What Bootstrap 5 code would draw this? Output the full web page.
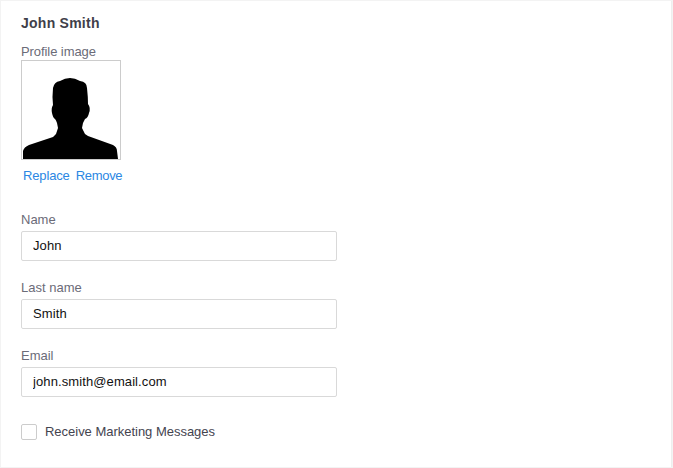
<!DOCTYPE html>
<html lang="en">
<head>
<meta charset="utf-8">
<title>Profile</title>
<link rel="stylesheet" href="https://cdn.jsdelivr.net/npm/bootstrap@5.3.0/dist/css/bootstrap.min.css">
<style>
html, body { height: 468px; overflow: hidden; background: #f3f3f3; }
body { font-family: "Liberation Sans", Arial, sans-serif; font-size: 13px; padding: 1px 1px 1px 1px; }
.sheet { background: #fff; height: 466px; margin-right: 0; border-right: 1px solid #eee; padding: 15px 20px 0 20px; }
.who { font-size: 14px; font-weight: 700; color: #3f3f4a; line-height: 15px; margin: 0 0 13px; letter-spacing: .25px; }
.lab { display: block; color: #6b6b78; font-size: 13px; line-height: 15px; margin: 0; }
.pname { letter-spacing: -.08px; padding-bottom: 1px; }
.photo { width: 100px; height: 100px; border: 1px solid #ccc; background: #fff; display: block; }
.acts { padding: 8px 2px 0; line-height: 15px; gap: 6px; }
.acts a { color: #2b87e3; text-decoration: none; letter-spacing: -.15px; }
.acts a + a { letter-spacing: -.3px; }
.fld { margin-top: 19px; width: 316px; }
.fld .form-control { height: 30px; margin-top: 4px; border: 1px solid #d9d9d9; border-radius: 2px; padding: 0 11px 2px; font-size: 13px; letter-spacing: .1px; color: #111; box-shadow: none; }
.fld.first { margin-top: 29px; }
.chk { margin-top: 27px; gap: 8px; min-height: 0; padding: 0; }
.chk .form-check-input { width: 16px; height: 16px; margin: 0; float: none; border: 1px solid #ccc; border-radius: 2px; }
.chk .form-check-label { color: #44444f; line-height: 16px; letter-spacing: -.02px; }
</style>
</head>
<body>
<div class="sheet">
  <h1 class="who">John Smith</h1>
  <span class="lab pname">Profile image</span>
  <svg class="photo" viewBox="0 0 98 98" role="img" aria-label="Profile image">
    <path fill="#000" d="M1 98 L1 90 Q2 86 7 84 L31 76 L34 73 L36 67 L35 62 Q34 59 33 58 Q31 57 30 52 Q29 47 31 44 Q30 36 31 27 Q32 21 38 20 Q43 17 48 17 Q53 17 58 20 Q65 21 65 27 Q66 36 66 43 Q69 47 67 52 Q66 57 63 58 Q62 60 61 62 L60 67 L63 73 L66 75 L91 84 Q95 86 95 90 L96 98 Z"/>
  </svg>
  <div class="acts d-flex"><a href="#">Replace</a><a href="#">Remove</a></div>
  <div class="fld first"><label class="lab" for="a">Name</label><input id="a" class="form-control" value="John"></div>
  <div class="fld"><label class="lab" for="b">Last name</label><input id="b" class="form-control" value="Smith"></div>
  <div class="fld"><label class="lab" for="c">Email</label><input id="c" class="form-control" value="john.smith@email.com"></div>
  <div class="form-check chk d-flex align-items-center">
    <input id="d" class="form-check-input" type="checkbox">
    <label class="form-check-label" for="d">Receive Marketing Messages</label>
  </div>
</div>
</body>
</html>
